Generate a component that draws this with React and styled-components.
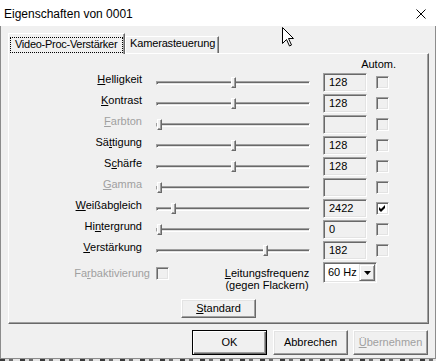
import React from "react";
import styled, { createGlobalStyle } from "styled-components";

const GlobalStyle = createGlobalStyle`
  *, *::before, *::after { box-sizing: border-box; }
  html, body { margin: 0; padding: 0; background: #f0f0f0; }
  body {
    font-family: "Liberation Sans", Arial, sans-serif;
    font-size: 11px;
    color: #000;
  }
  #root { width: 436px; height: 361px; overflow: hidden; }
`;

const Screen = styled.div`
  position: relative;
  width: 436px;
  height: 361px;
  overflow: hidden;
  background: repeating-linear-gradient(
    90deg,
    #3a3a3a 0 5px,
    #d8d8d8 5px 9px,
    #6a6a6a 9px 13px,
    #e6e6e6 13px 20px
  );
`;

const Window = styled.div`
  width: 436px;
  height: 359px;
  display: flex;
  flex-direction: column;
`;

const TitleBar = styled.div`
  height: 26px;
  flex: none;
  background: #fff;
  display: flex;
  align-items: center;
  justify-content: space-between;
  padding: 1px 10px 0 4px;
  font-size: 12px;
  color: #000;
`;

const CloseIcon = styled.svg`
  display: block;
  width: 10px;
  height: 10px;
  margin-top: 1px;
`;

const Body = styled.div`
  flex: 1;
  background: #f0f0f0;
  border: 1px solid #8c8c8c;
  border-top: none;
  padding: 7px 6px 0 7px;
  display: flex;
  flex-direction: column;
`;

const TabRow = styled.div`
  display: flex;
  align-items: flex-end;
  height: 20px;
`;

const Tab = styled.div`
  position: relative;
  z-index: ${(p) => (p.$active ? 2 : 1)};
  width: ${(p) => p.$w}px;
  height: ${(p) => (p.$active ? "21px" : "17px")};
  margin-bottom: ${(p) => (p.$active ? "-1px" : "0")};
  background: #f0f0f0;
  border-top: 1px solid #fff;
  border-left: 1px solid #fff;
  border-right: 1px solid #696969;
  box-shadow: inset -1px 0 #a0a0a0;
  padding: ${(p) => (p.$active ? "3px 0 0 1px" : "0 0 0 4px")};
  line-height: 13px;
  white-space: nowrap;
  letter-spacing: -0.15px;
`;

const FocusBox = styled.div`
  width: 113px;
  height: 16px;
  border: 1px dotted #000;
  padding: 0 0 0 4px;
  line-height: 13px;
  white-space: nowrap;
  letter-spacing: -0.27px;
`;

const Panel = styled.div`
  width: 421px;
  height: 271px;
  background: #f0f0f0;
  border-top: 1px solid #fff;
  border-left: 1px solid #fff;
  border-right: 1px solid #696969;
  border-bottom: 1px solid #696969;
  box-shadow: inset -1px -1px #a0a0a0;
  display: flex;
  flex-direction: column;
`;

const HeaderRow = styled.div`
  height: 18px;
  display: flex;
  justify-content: flex-end;
  padding: 4px 32px 0 0;
  line-height: 13px;
`;

const Grid = styled.div`
  display: grid;
  grid-template-columns: 147px 167px 53px 13px;
  grid-auto-rows: 21px;
`;

const Label = styled.div`
  text-align: right;
  padding: 1px 14px 0 0;
  line-height: 13px;
  white-space: nowrap;
  color: ${(p) => (p.$disabled ? "#a0a0a0" : "#000")};
`;

const U = styled.span`
  text-decoration: underline;
  text-underline-offset: 1px;
`;

const SliderCell = styled.div`
  position: relative;
  width: 154px;
  height: 21px;
  display: flex;
  align-items: center;
`;

const Track = styled.div`
  width: 100%;
  height: 4px;
  border-top: 1px solid #a0a0a0;
  border-left: 1px solid #a0a0a0;
  border-bottom: 1px solid #fff;
  border-right: 1px solid #fff;
  background: #e3e3e3;
  box-shadow: inset 1px 1px #696969;
`;

const Thumb = styled.div`
  position: absolute;
  top: 5px;
  width: 5px;
  height: 11px;
  background: #f0f0f0;
  border-top: 1px solid #fff;
  border-left: 1px solid #fff;
  border-right: 1px solid #696969;
  border-bottom: 1px solid #696969;
  box-shadow: inset -1px -1px #a0a0a0;
`;

const EditBox = styled.div`
  align-self: start;
  margin-top: 1px;
  width: 44px;
  height: 19px;
  background: #f0f0f0;
  border: 1px solid;
  border-color: #a0a0a0 #fff #fff #a0a0a0;
  box-shadow: inset 1px 1px #696969, inset -1px -1px #e3e3e3;
  padding-left: 5px;
  line-height: 17px;
  color: #000;
`;

const CheckBox = styled.div`
  align-self: center;
  width: 13px;
  height: 13px;
  background: ${(p) => (p.$checked ? "#fff" : "#f0f0f0")};
  border: 1px solid;
  border-color: #a0a0a0 #fff #fff #a0a0a0;
  box-shadow: inset 1px 1px #696969, inset -1px -1px #e3e3e3;
  display: flex;
  align-items: center;
  justify-content: center;
`;

const CheckIcon = styled.svg`
  display: block;
  width: 7px;
  height: 7px;
`;

const BottomRow = styled.div`
  height: 30px;
  display: flex;
  align-items: flex-start;
`;

const ColorGroup = styled.div`
  width: 160px;
  margin-top: 6px;
  height: 13px;
  display: flex;
  align-items: center;
  justify-content: flex-end;
  gap: 6px;
  color: #a0a0a0;
  line-height: 13px;
`;

const FreqText = styled.div`
  width: 90px;
  margin: 6px 0 0 53px;
  text-align: center;
  line-height: 12px;
  white-space: nowrap;
`;

const Select = styled.div`
  width: 54px;
  height: 21px;
  margin: 1px 0 0 11px;
  background: #fff;
  border: 1px solid;
  border-color: #a0a0a0 #fff #fff #a0a0a0;
  box-shadow: inset 1px 1px #696969, inset -1px -1px #e3e3e3;
  display: flex;
  align-items: center;
  justify-content: space-between;
  padding: 1px 1px 1px 4px;
  line-height: 13px;
`;

const SelectButton = styled.div`
  width: 16px;
  height: 17px;
  background: #f0f0f0;
  border-top: 1px solid #e3e3e3;
  border-left: 1px solid #e3e3e3;
  border-right: 1px solid #696969;
  border-bottom: 1px solid #696969;
  box-shadow: inset 1px 1px #fff, inset -1px -1px #a0a0a0;
  display: flex;
  align-items: center;
  justify-content: center;
`;

const Arrow = styled.svg`
  display: block;
  width: 7px;
  height: 4px;
`;

const StandardArea = styled.div`
  display: flex;
  justify-content: center;
  padding-top: 8px;
`;

const Button = styled.button`
  width: 75px;
  height: ${(p) => p.$h}px;
  padding: 0;
  margin: 0;
  font-family: "Liberation Sans", Arial, sans-serif;
  font-size: 11px;
  line-height: 13px;
  color: ${(p) => (p.$disabled ? "#a0a0a0" : "#000")};
  background: #f0f0f0;
  border: 1px solid;
  border-color: ${(p) =>
    p.$default ? "#000" : "#fff #696969 #696969 #fff"};
  box-shadow: ${(p) =>
    p.$default
      ? "inset 1px 1px #fff, inset -1px -1px #696969, inset -2px -2px #a0a0a0"
      : "inset -1px -1px #a0a0a0, inset 1px 1px #e3e3e3"};
  margin-left: ${(p) => p.$ml || 0}px;
`;

const ButtonRow = styled.div`
  display: flex;
  justify-content: flex-end;
  margin-top: 6px;
  padding-right: 1px;
`;

const Cursor = styled.svg`
  position: absolute;
  left: 282px;
  top: 27px;
  width: 13px;
  height: 20px;
`;

const rows = [
  { label: <><U>H</U>elligkeit</>, value: "128", frac: 128 / 255 },
  { label: <><U>K</U>ontrast</>, value: "128", frac: 128 / 255 },
  { label: <><U>F</U>arbton</>, value: "", frac: 0, disabled: true },
  { label: <>Sä<U>t</U>tigung</>, value: "128", frac: 128 / 255 },
  { label: <>S<U>c</U>härfe</>, value: "128", frac: 128 / 255 },
  { label: <><U>G</U>amma</>, value: "", frac: 0, disabled: true },
  { label: <><U>W</U>eißabgleich</>, value: "2422", frac: (2422 - 2000) / 4500, checked: true },
  { label: <>Hi<U>n</U>tergrund</>, value: "0", frac: 0 },
  { label: <><U>V</U>erstärkung</>, value: "182", frac: 182 / 255 },
];

function Check() {
  return (
    <CheckIcon viewBox="0 0 7 7">
      <polygon points="0,2 2,4 6,0 6,3 2,7 0,5" fill="#000" />
    </CheckIcon>
  );
}

export default function App() {
  return (
    <Screen>
      <GlobalStyle />
      <Window>
        <TitleBar>
          <span>Eigenschaften von 0001</span>
          <CloseIcon viewBox="0 0 10 10">
            <path d="M0.5 0.5 L9.5 9.5 M9.5 0.5 L0.5 9.5" stroke="#000" strokeWidth="1" fill="none" />
          </CloseIcon>
        </TitleBar>
        <Body>
          <TabRow>
            <Tab $active $w={117}>
              <FocusBox>Video-Proc-Verstärker</FocusBox>
            </Tab>
            <Tab $w={94}>Kamerasteuerung</Tab>
          </TabRow>
          <Panel>
            <HeaderRow>Autom.</HeaderRow>
            <Grid>
              {rows.map((r, i) => (
                <React.Fragment key={i}>
                  <Label $disabled={r.disabled}>{r.label}</Label>
                  <SliderCell>
                    <Track />
                    <Thumb style={{ left: `calc(1px + ${r.frac} * (100% - 6px))` }} />
                  </SliderCell>
                  <EditBox>{r.value}</EditBox>
                  <CheckBox $checked={r.checked}>{r.checked && <Check />}</CheckBox>
                </React.Fragment>
              ))}
            </Grid>
            <BottomRow>
              <ColorGroup>
                <span>Fa<U>r</U>baktivierung</span>
                <CheckBox />
              </ColorGroup>
              <FreqText>
                <U>L</U>eitungsfrequenz
                <br />
                (gegen Flackern)
              </FreqText>
              <Select>
                <span>60 Hz</span>
                <SelectButton>
                  <Arrow viewBox="0 0 7 4">
                    <polygon points="0,0 7,0 3.5,4" fill="#000" />
                  </Arrow>
                </SelectButton>
              </Select>
            </BottomRow>
            <StandardArea>
              <Button $h={19}><U>S</U>tandard</Button>
            </StandardArea>
          </Panel>
          <ButtonRow>
            <Button $h={25} $default>OK</Button>
            <Button $h={25} $ml={6}>Abbrechen</Button>
            <Button $h={25} $ml={5} $disabled><U>Ü</U>bernehmen</Button>
          </ButtonRow>
        </Body>
      </Window>
      <Cursor viewBox="0 0 13 20">
        <path
          d="M0.5 0.5 L0.5 16.5 L4.5 12.5 L7.5 19 L9.5 18 L6.5 11.5 L11.5 11.5 Z"
          fill="#fff"
          stroke="#000"
          strokeWidth="1"
          strokeLinejoin="miter"
        />
      </Cursor>
    </Screen>
  );
}
